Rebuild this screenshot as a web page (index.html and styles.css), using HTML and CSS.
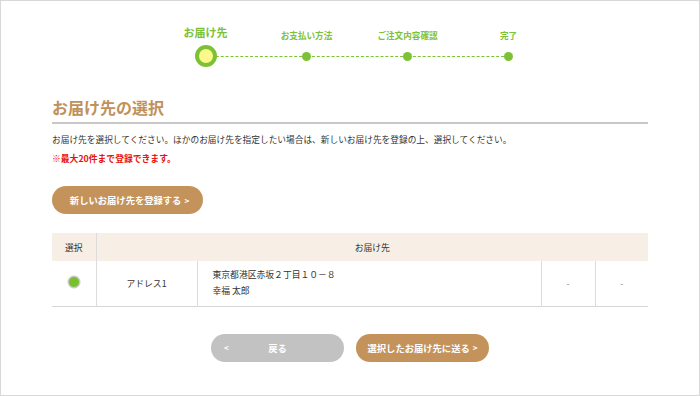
FILE: index.html
```html
<!DOCTYPE html>
<html lang="ja">
<head>
<meta charset="utf-8">
<link rel="stylesheet" href="styles.css">
</head>
<body>
<div class="page">
  <ol class="steps">
    <li class="step current"><span class="step-label">お届け先</span><span class="dot-wrap"><span class="dot"></span></span></li>
    <li class="step"><span class="step-label">お支払い方法</span><span class="dot-wrap"><span class="dot"></span></span></li>
    <li class="step"><span class="step-label">ご注文内容確認</span><span class="dot-wrap"><span class="dot"></span></span></li>
    <li class="step"><span class="step-label">完了</span><span class="dot-wrap"><span class="dot"></span></span></li>
  </ol>

  <main class="content">
    <h1 class="title">お届け先の選択</h1>
    <p class="lead">お届け先を選択してください。ほかのお届け先を指定したい場合は、新しいお届け先を登録の上、選択してください。</p>
    <p class="note">※最大20件まで登録できます。</p>

    <div class="add-row">
      <button class="btn btn-brown btn-add">新しいお届け先を登録する <span class="chev">&gt;</span></button>
    </div>

    <table class="addr-table">
      <colgroup>
        <col class="c-sel"><col class="c-name"><col class="c-addr"><col class="c-x"><col class="c-y">
      </colgroup>
      <thead>
        <tr><th class="th-sel">選択</th><th colspan="4">お届け先</th></tr>
      </thead>
      <tbody>
        <tr>
          <td class="td-sel"><span class="radio"></span></td>
          <td class="td-name">アドレス1</td>
          <td class="td-addr">東京都港区赤坂２丁目１０－８<br>幸福 太郎</td>
          <td class="td-dash">-</td>
          <td class="td-dash">-</td>
        </tr>
      </tbody>
    </table>

    <div class="actions">
      <button class="btn btn-grey"><span class="chev-l">&lt;</span>戻る</button>
      <button class="btn btn-brown btn-next">選択したお届け先に送る <span class="chev">&gt;</span></button>
    </div>
  </main>
</div>
</body>
</html>
```

FILE: styles.css
```css
* { box-sizing: border-box; }
html, body { margin: 0; padding: 0; background: #fff; }
body {
  font-family: "Noto Sans CJK JP", "Noto Sans", sans-serif;
  color: #333;
}
.page {
  width: 700px;
  height: 396px;
  border: 1px solid #d8d8d8;
  overflow: hidden;
}

/* stepper */
.steps {
  list-style: none;
  margin: 0;
  padding: 21px 0 0 154px;
  display: flex;
}
.step {
  width: 101px;
  display: flex;
  flex-direction: column;
  align-items: center;
}
.step-label {
  height: 23px;
  display: flex;
  align-items: flex-end;
  font-size: 8.6px;
  font-weight: bold;
  color: #7dc234;
  line-height: 1;
  padding-bottom: 5px;
  white-space: nowrap;
}
.step.current .step-label {
  font-size: 11px;
  padding-bottom: 7px;
}
.dot-wrap {
  position: relative;
  width: 100%;
  height: 22px;
  display: flex;
  align-items: center;
  justify-content: center;
}
.step:not(:first-child) .dot-wrap::before {
  content: "";
  position: absolute;
  top: 11px;
  right: 50%;
  width: 101px;
  border-top: 1px dashed #7dc234;
}
.dot {
  position: relative;
  z-index: 1;
  width: 9px;
  height: 9px;
  border-radius: 50%;
  background: #7dc234;
}
.step.current .dot {
  width: 22px;
  height: 22px;
  background: #fbf98c;
  border: 4px solid #7dc234;
}

/* content */
.content {
  width: 596px;
  margin: 0 auto;
}
.title {
  margin: 29px 0 0;
  font-size: 16px;
  font-weight: bold;
  color: #c0915a;
  line-height: 22px;
  padding-bottom: 4px;
  border-bottom: 2px solid #c8c8c8;
}
.lead {
  margin: 9px 0 0;
  font-size: 8.7px;
  line-height: 13px;
}
.note {
  margin: 6px 0 0;
  font-size: 8.8px;
  line-height: 13px;
  color: #e8120c;
  font-weight: bold;
}

.btn {
  font-family: inherit;
  border: none;
  height: 28px;
  border-radius: 14px;
  color: #fff;
  font-size: 9.3px;
  font-weight: bold;
  display: inline-flex;
  align-items: center;
  justify-content: center;
  padding: 0;
}
.btn-brown { background: #c4935c; }
.btn-grey { background: #c2c2c2; }
.chev { margin-left: 3px; font-size: 8px; }
.add-row { margin-top: 20px; }
.btn-add { width: 151px; padding-left: 4px; }

/* table */
.addr-table {
  margin-top: 19px;
  width: 596px;
  border-collapse: collapse;
  table-layout: fixed;
  font-size: 8.8px;
}
.c-sel { width: 44px; }
.c-name { width: 101px; }
.c-addr { width: 344px; }
.c-x { width: 54px; }
.c-y { width: 53px; }
.addr-table th {
  background: #f7efe5;
  height: 28px;
  font-weight: normal;
  text-align: center;
  padding: 0;
}
.addr-table .th-sel { border-right: 1px solid #dcdcdc; }
.addr-table tbody tr { border-bottom: 1px solid #d6d6d6; }
.addr-table td {
  height: 45px;
  padding: 0;
  text-align: center;
  border-right: 1px solid #dcdcdc;
}
.addr-table td:last-child { border-right: none; }
.td-addr {
  text-align: left !important;
  padding-left: 15px !important;
  line-height: 16px;
}
.td-dash { color: #888; }
.radio {
  display: inline-block;
  width: 10px;
  height: 10px;
  border-radius: 50%;
  background: #78c12d;
  box-shadow: 0 0 0 1.5px #c9c9c9;
  vertical-align: middle;
  margin-bottom: 4px;
}

/* actions */
.actions {
  margin-top: 27px;
  display: flex;
  justify-content: center;
  gap: 12px;
}
.btn-grey {
  width: 133px;
  position: relative;
}
.chev-l {
  position: absolute;
  left: 13px;
  font-size: 8px;
}
.btn-next { width: 133px; }
```
